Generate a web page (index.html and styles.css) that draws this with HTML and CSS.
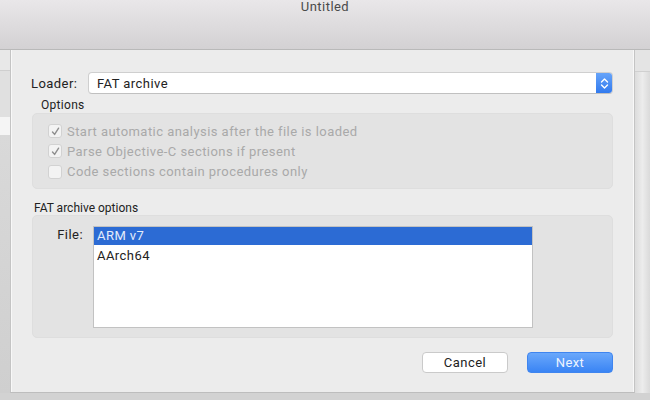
FILE: index.html
```html
<!DOCTYPE html>
<html>
<head>
<meta charset="utf-8">
<link rel="stylesheet" href="styles.css">
</head>
<body>
<div class="titlebar"><span class="title">Untitled</span></div>
<div class="desk">
  <div class="side side-left">
    <div class="band band-top"></div>
    <div class="band band-mid"></div>
    <div class="band band-white"></div>
    <div class="band band-rest"></div>
  </div>
  <div class="sheet">
    <div class="loader-row">
      <span class="loader-label">Loader:</span>
      <div class="popup">
        <span class="popup-text">FAT archive</span>
        <span class="stepper">
          <svg width="9" height="13" viewBox="0 0 9 13"><path d="M1.5 5 L4.5 2 L7.5 5 M1.5 8 L4.5 11 L7.5 8" fill="none" stroke="#fff" stroke-width="1.4" stroke-linecap="round" stroke-linejoin="round"/></svg>
        </span>
      </div>
    </div>
    <div class="group-label">Options</div>
    <div class="box options-box">
      <div class="check-row"><span class="cb checked"><svg width="11" height="11" viewBox="0 0 11 11"><path d="M2.5 6 L4.6 8.4 L8.6 2.2" fill="none" stroke="#8e8e8e" stroke-width="1.4" stroke-linecap="round" stroke-linejoin="round"/></svg></span><span class="cb-text">Start automatic analysis after the file is loaded</span></div>
      <div class="check-row"><span class="cb checked"><svg width="11" height="11" viewBox="0 0 11 11"><path d="M2.5 6 L4.6 8.4 L8.6 2.2" fill="none" stroke="#8e8e8e" stroke-width="1.4" stroke-linecap="round" stroke-linejoin="round"/></svg></span><span class="cb-text">Parse Objective-C sections if present</span></div>
      <div class="check-row"><span class="cb"></span><span class="cb-text">Code sections contain procedures only</span></div>
    </div>
    <div class="group-label fat-label">FAT archive options</div>
    <div class="box fat-box">
      <span class="file-label">File:</span>
      <div class="list">
        <div class="list-row selected">ARM v7</div>
        <div class="list-row">AArch64</div>
      </div>
    </div>
    <div class="buttons">
      <button class="btn cancel">Cancel</button>
      <button class="btn next">Next</button>
    </div>
  </div>
  <div class="side side-right">
    <div class="band rband-top"></div>
    <div class="band rband-rest"></div>
  </div>
</div>
<div class="floor"></div>
</body>
</html>
```

FILE: styles.css
```css
html, body {
  margin: 0;
  padding: 0;
}
body {
  width: 650px;
  height: 400px;
  overflow: hidden;
  background: #d4d4d4;
  font-family: Roboto, "Liberation Sans", sans-serif;
  font-size: 13px;
  letter-spacing: 0.45px;
  color: #222;
}
.titlebar {
  height: 49px;
  border-bottom: 1px solid #b9b9b9;
  background: linear-gradient(#e9e7e9, #d3d1d3);
  display: flex;
  justify-content: center;
  align-items: flex-start;
}
.title {
  font-size: 13px;
  line-height: 14px;
  color: #4a4a4a;
  margin-top: 0;
}
.desk {
  display: flex;
  height: 343px;
}
.side {
  display: flex;
  flex-direction: column;
}
.side-left {
  width: 10px;
}
.band-top {
  height: 20px;
  background: #e8e8e8;
  border-bottom: 1px solid #cfcfcf;
}
.band-mid {
  height: 46px;
  background: #e0e0e0;
}
.band-white {
  height: 18px;
  background: #f5f5f5;
}
.band-rest {
  flex: 1;
  background: linear-gradient(#d9d9d9, #cfcfcf);
}
.side-right {
  width: 15px;
}
.rband-top {
  height: 21px;
  background: #e4e4e4;
  border-bottom: 1px solid #d0d0d0;
}
.rband-rest {
  flex: 1;
  background: linear-gradient(90deg, #dcdcdc, #ececec 50%, #dadada);
}
.sheet {
  width: 625px;
  background: #ececec;
  border-left: 1px solid #c4c4c4;
  border-right: 1px solid #c4c4c4;
  border-bottom: 1px solid #bdbdbd;
  box-shadow: inset 1px 0 0 #f8f8f8, inset -1px 0 0 #f8f8f8;
  padding: 22px 21px 19px 20px;
  box-sizing: border-box;
  height: 343px;
  display: flex;
  flex-direction: column;
}
.loader-row {
  display: flex;
  align-items: center;
  height: 22px;
}
.loader-label {
  width: 57px;
  color: #222;
}
.popup {
  flex: 1;
  height: 22px;
  box-sizing: border-box;
  background: #fff;
  border: 1px solid #cfcfcf;
  border-bottom-color: #c0c0c0;
  border-radius: 4px;
  display: flex;
  align-items: center;
  padding-left: 8px;
  overflow: hidden;
}
.popup-text {
  flex: 1;
  color: #222;
}
.stepper {
  width: 17px;
  height: 22px;
  margin-right: -1px;
  background: linear-gradient(#69a6fa, #2f78ee);
  border-radius: 0 4px 4px 0;
  display: flex;
  align-items: center;
  justify-content: center;
}
.group-label {
  font-size: 12px;
  line-height: 14px;
  height: 14px;
  margin-top: 4px;
  margin-left: 10px;
  letter-spacing: 0.3px;
  color: #222;
}
.box {
  background: #e3e3e3;
  border: 1px solid #dedede;
  border-radius: 5px;
  box-sizing: border-box;
}
.options-box {
  margin-top: 1px;
  margin-left: 1px;
  height: 76px;
  padding: 7px 0 6px 15px;
  display: flex;
  flex-direction: column;
}
.check-row {
  height: 21px;
  display: flex;
  align-items: center;
}
.cb {
  width: 12px;
  height: 12px;
  background: #f3f3f3;
  border: 1px solid #d2d2d2;
  border-radius: 3px;
  display: flex;
  align-items: center;
  justify-content: center;
  margin-right: 5px;
}
.cb-text {
  color: #a9a9a9;
  font-size: 13px;
}
.fat-label {
  margin-top: 12px;
  margin-left: 3px;
  letter-spacing: 0;
}
.fat-box {
  margin-left: 1px;
  height: 123px;
  padding: 10px 0 11px 0;
  display: flex;
  align-items: flex-start;
}
.file-label {
  width: 50px;
  text-align: right;
  margin-right: 10px;
  line-height: 18px;
  color: #222;
}
.list {
  width: 440px;
  height: 102px;
  box-sizing: border-box;
  background: #fff;
  border: 1px solid #c2c2c2;
  padding-top: 0;
}
.list-row {
  height: 18px;
  line-height: 18px;
  margin-bottom: 2px;
  padding-left: 3px;
  color: #222;
}
.list-row.selected {
  background: #2c6bd4;
  color: #e3ecfb;
}
.buttons {
  margin-top: 14px;
  display: flex;
  justify-content: flex-end;
  gap: 19px;
}
.btn {
  width: 86px;
  height: 21px;
  border-radius: 4px;
  font-family: Roboto, "Liberation Sans", sans-serif;
  font-size: 13px;
  letter-spacing: 0.45px;
  padding: 0;
}
.cancel {
  background: #fff;
  border: 1px solid #cacaca;
  color: #222;
}
.next {
  background: linear-gradient(#6aa8fb, #3a84f4);
  border: 1px solid #3f85ef;
  color: #edf4ff;
}
.floor {
  height: 7px;
  background: #d2d2d2;
}
```
